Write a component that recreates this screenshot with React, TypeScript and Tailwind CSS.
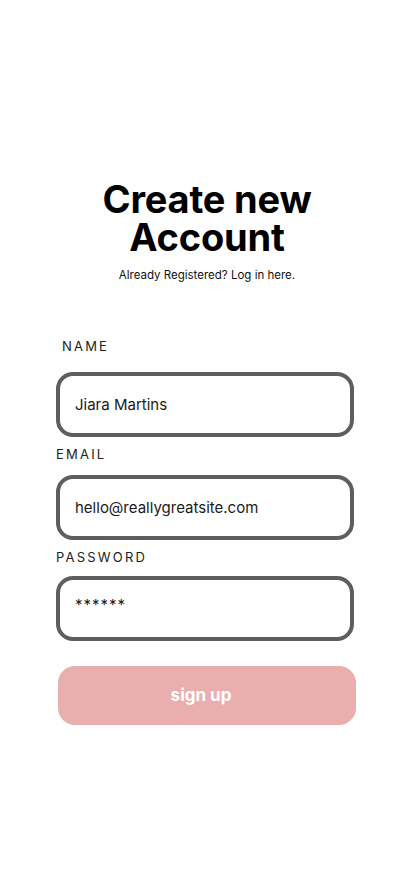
export default function App() {
  const fields = [
    { label: 'NAME', value: 'Jiara Martins', labelCls: 'pl-[6px]', boxCls: 'mt-[18px]' },
    { label: 'EMAIL', value: 'hello@reallygreatsite.com', labelCls: 'mt-[9px]', boxCls: 'mt-[13px]' },
    { label: 'PASSWORD', value: '******', labelCls: 'mt-[9px]', boxCls: 'mt-[11px]' },
  ];

  return (
    <div className="min-h-[896px] w-full bg-white font-['Inter',sans-serif] text-black">
      <div className="flex flex-col items-center pt-[180px]">
        <h1 className="text-center text-[38px] font-bold leading-[38px] tracking-[-0.2px]">
          Create new
          <br />
          Account
        </h1>
        <p className="mt-[11px] text-[11.5px] text-[#111]">Already Registered? Log in here.</p>
      </div>

      <form className="mt-[54px] flex flex-col px-[56px]" onSubmit={(e) => e.preventDefault()}>
        {fields.map((f) => (
          <div key={f.label}>
            <label className={`block text-[13px] leading-[16px] tracking-[2.2px] text-[#222] ${f.labelCls}`}>
              {f.label}
            </label>
            <div
              className={`flex h-[65px] w-[298px] rounded-[17px] border-[4px] border-[#5e5e5e] px-[15px] ${f.boxCls} ${
                f.label === 'PASSWORD' ? 'items-start pt-[14px]' : 'items-center'
              }`}
            >
              <span className={`text-[15px] text-[#1a1a1a] ${f.label === 'PASSWORD' ? 'tracking-[1px]' : ''}`}>
                {f.value}
              </span>
            </div>
          </div>
        ))}

        <button
          type="submit"
          className="ml-[2px] mt-[25px] h-[59px] w-[298px] rounded-[17px] bg-[#eaaeae] pr-[12px] text-[17px] font-bold text-white"
        >
          sign up
        </button>
      </form>
    </div>
  );
}
